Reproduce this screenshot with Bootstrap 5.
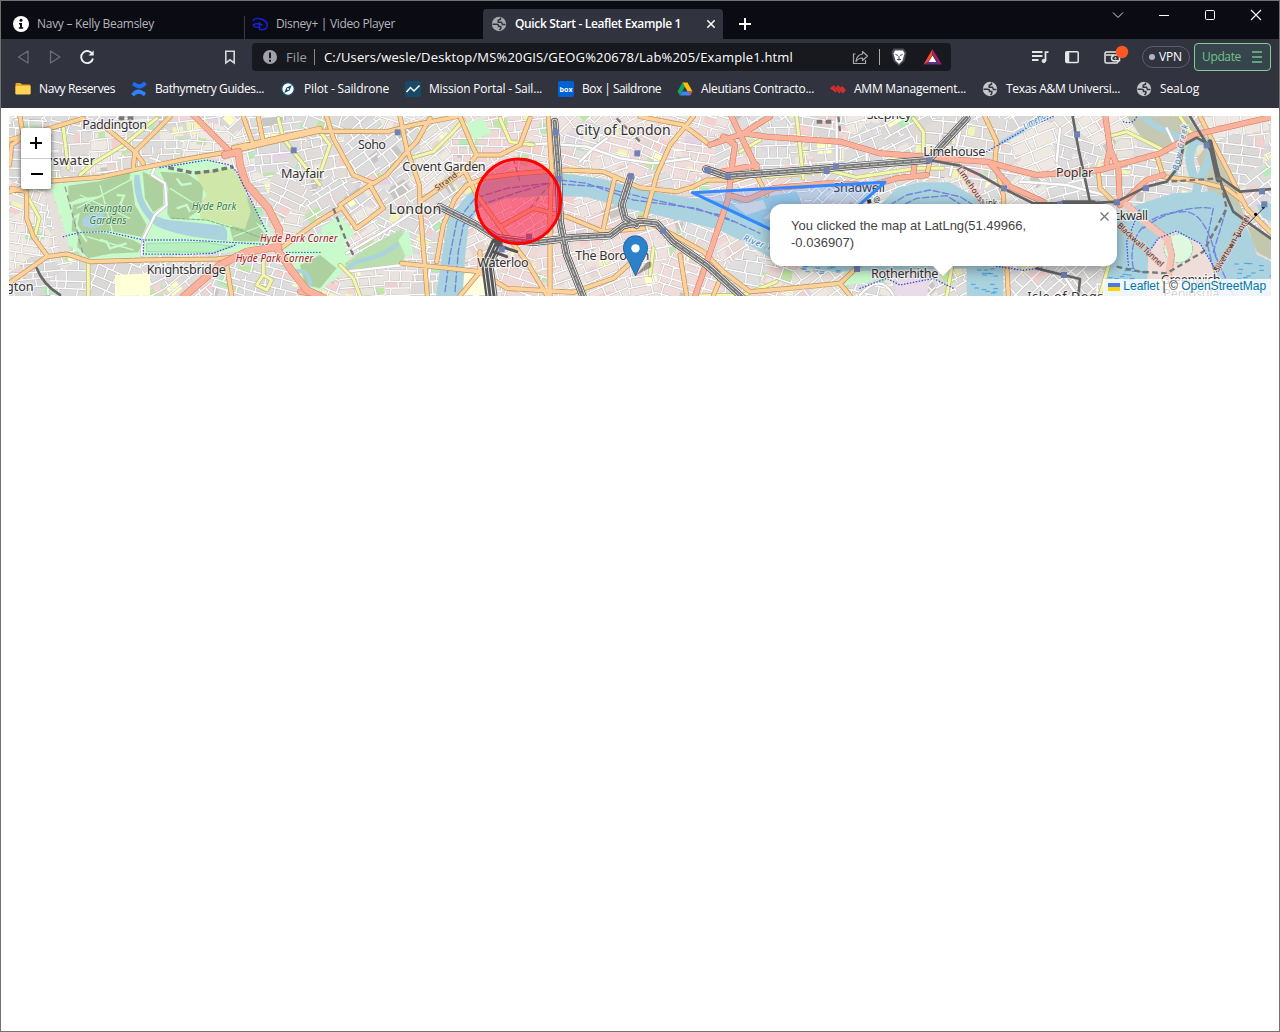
<!DOCTYPE html>
<html lang="en">
<head>
<meta charset="utf-8">
<title>Quick Start - Leaflet Example 1</title>
<link href="https://cdn.jsdelivr.net/npm/bootstrap@5.3.0/dist/css/bootstrap.min.css" rel="stylesheet">
<style>
  html, body { height: 100%; margin: 0; }
  body { font-family: "Open Sans", "Noto Sans", sans-serif; font-size: 12px; line-height: 16px; background: #fff; }
  .win { height: 1032px; width: 1280px; border: 1px solid #70736f; }
  .tabstrip { height: 38px; background: #0b0b14; color: #b4b5ba; }
  .tabitem { height: 30px; padding-left: 12px; gap: 8px; }
  .tab-a { width: 243px; }
  .tabsep { width: 1px; height: 23px; background: #3b3b40; }
  .tab-b { width: 238px; padding-left: 7px; }
  .tab-on { width: 240px; padding-left: 8px; background: #31333f; color: #fff; border-radius: 4px 4px 0 0; font-weight: 600; }
  .winbtns { margin-top: 6px; margin-right: 15px; gap: 30px; height: 16px; }
  .toolbar { height: 36px; background: #31333f; color: #fff; }
  .omni { width: 699px; height: 28px; margin-left: 14px; background: #17191f; border-radius: 4px; font-size: 13px; padding-left: 10px; }
  .fileword { color: #9b9da5; }
  .vbar { width: 1px; height: 16px; background: #85878e; }
  .vpn { width: 48px; height: 22px; border: 1px solid #5b5e72; border-radius: 11px; padding-left: 6px; gap: 4px; }
  .vdot { width: 6px; height: 6px; border-radius: 3px; background: #b0b2c8; }
  .upd { width: 77px; height: 28px; border: 1px solid #7fcf97; border-radius: 4px; background: #36454b; color: #75c08a; padding-left: 7px; }
  .bmbar { height: 33px; background: #31333f; color: #fff; padding: 0 0 5px 14px; gap: 16px; }
  .bm { gap: 8px; }
  .fit { white-space: nowrap; display: inline-block; }
  svg { display: block; flex: none; }
  .mapbox { margin: 8px 8px 0; height: 180px; overflow: hidden; font-family: "Liberation Sans", Arial, sans-serif; }
  .zoomer { left: 12px; top: 12px; width: 30px; height: 61px; background: #fff; border-radius: 2px; box-shadow: 0 1px 5px rgba(0,0,0,.65); }
  .zoomer div { height: 30px; }
  .zoomer div + div { border-top: 1px solid #ccc; height: 31px; }
  .pop { left: 761px; top: 88px; width: 347px; height: 62px; padding: 13px 24px 0 21px; background: #fff; border-radius: 12px; box-shadow: 0 3px 14px rgba(0,0,0,.4); color: #444; font-size: 13px; line-height: 17px; }
  .tip { left: 162px; top: 61px; }
  .pclose { right: 8px; top: 8px; }
  .attr { right: 0; bottom: 0; height: 17px; width: 168px; padding: 0 5px 2px; gap: 3.300px; background: rgba(255,255,255,.8); font-size: 12px; line-height: 15px; color: #333; white-space: nowrap; }
  .attr span { color: #0078a8; }
  .fl { fill: none; stroke-linejoin: round; stroke-linecap: round; }
  .lab text { font-family: "Noto Sans", sans-serif; fill: #333; stroke: #fff; stroke-opacity: .65; stroke-width: 7px; paint-order: stroke; stroke-linejoin: round; }
</style>
<script src="https://cdn.jsdelivr.net/npm/bootstrap@5.3.0/dist/js/bootstrap.bundle.min.js"></script>
</head>
<body>
<svg width="0" height="0" class="position-absolute">
  <defs>
    <symbol id="globe" viewBox="0 0 16 16"><circle cx="8" cy="8" r="7.200" fill="currentColor"/><path d="M1.500 8.200H5.500Q7.500 8.200 7.500 9.500V10.500H9.800V12.500L8.500 14" fill="none" stroke="#31333f" stroke-width="1.500"/><path d="M9.500 1.500V3.200L7.200 4.200V6.200H10.500L11.500 8.500H14.500" fill="none" stroke="#31333f" stroke-width="1.500"/></symbol>
  </defs>
</svg>
<div class="win d-flex flex-column">
  <div class="tabstrip d-flex align-items-end">
    <div class="tab-a d-flex align-items-center tabitem">
      <svg width="16" height="16" viewBox="0 0 16 16"><circle cx="8" cy="8" r="8" fill="#fff"/><circle cx="8" cy="4.200" r="1.500" fill="#0b0b14"/><path d="M6 7h3v4.300h1.200v1.400H5.800v-1.400H7V8.400H6z" fill="#0b0b14"/></svg>
      <span class="fit" data-w="117">Navy – Kelly Beamsley</span>
    </div>
    <div class="tabsep"></div>
    <div class="tab-b d-flex align-items-center tabitem">
      <svg width="16" height="16" viewBox="0 0 16 16" fill="none" stroke="#1d20e0" stroke-width="1.400"><path d="M1.500 5 C.5 2.500 5.500 1.800 9 3 C14 4.700 16 7.500 15 10.500 C14 13.500 10.500 14 7.500 13.300 M7.500 6 V13.500 M10.500 9 C6 7 .8 7.500 1.500 9.500 C2 11 5 11.300 8 11"/></svg>
      <span class="fit" data-w="119">Disney+ | Video Player</span>
    </div>
    <div class="tab-on d-flex align-items-center tabitem">
      <svg width="16" height="16" style="color:#a7a9b0"><use href="#globe"/></svg>
      <span class="fit" data-w="166">Quick Start - Leaflet Example 1</span>
      <svg class="ms-auto me-2" width="8" height="8" viewBox="0 0 8 8" stroke="#fff" stroke-width="1.500"><path d="M.3.3 7.700 7.700M7.700.3.3 7.700"/></svg>
    </div>
    <svg class="ms-3" width="12" height="30" viewBox="0 0 12 30" stroke="#fff" stroke-width="2"><path d="M0 15H12M6 9V21"/></svg>
    <div class="winbtns d-flex align-items-center ms-auto align-self-start">
      <svg width="16" height="16" viewBox="0 0 16 16" fill="none" stroke="#ddd"><path d="M3 5.500 8 10.500 13 5.500"/></svg>
      <svg width="16" height="16" viewBox="0 0 16 16" stroke="#fff"><path d="M3 8.500H13"/></svg>
      <svg width="16" height="16" viewBox="0 0 16 16" fill="none" stroke="#fff"><rect x="3.500" y="3.500" width="9" height="9" rx="1.200"/></svg>
      <svg width="16" height="16" viewBox="0 0 16 16" stroke="#fff" stroke-width="1.100"><path d="M3 3 13 13M13 3 3 13"/></svg>
    </div>
  </div>
  <div class="toolbar d-flex align-items-center">
    <svg width="96" height="20" viewBox="1 0 96 20" fill="none" stroke="#6b6d78" stroke-width="1.300" stroke-linejoin="round"><path d="M28 4V16L18.500 10ZM50.500 4V16L60 10Z"/><path d="M92.600 7.500A6 6 0 1 0 93 11.500" stroke="#f0f0f0" stroke-width="1.900"/><path d="M93.700 3.500V8.500H88.500Z" fill="#f0f0f0" stroke="none"/></svg>
    <svg style="margin-left:127px" width="14" height="16" viewBox="0 0 14 16" fill="none" stroke="#d6d7da" stroke-width="1.600"><path d="M1.800 2.200H10.200V14L6 10.800 1.800 14Z"/></svg>
    <div class="omni d-flex align-items-center">
      <svg width="16" height="16" viewBox="0 0 16 16"><circle cx="8" cy="8" r="7" fill="#a0a2a9"/><path d="M7 3.500h2v5.800H7zM7 10.800h2v1.900H7z" fill="#17191f"/></svg>
      <span class="fit fileword ms-2" data-w="21">File</span>
      <span class="vbar" style="margin-left:7px"></span>
      <span class="fit" style="margin-left:9px" data-w="469">C:/Users/wesle/Desktop/MS%20GIS/GEOG%20678/Lab%205/Example1.html</span>
      <svg width="106" height="20" viewBox="845 47 106 20" class="ms-auto">
        <path d="M855.500 54H853.500V63.500H865.500V60" fill="none" stroke="#a7a9ae" stroke-width="1.200"/>
        <path d="M862.500 51.500 867.500 56 862.500 60.500V58Q858.500 57.800 856 61.500 Q856.500 55 862.500 54Z" fill="none" stroke="#a7a9ae" stroke-width="1.200" stroke-linejoin="round"/>
        <path d="M879.500 49V65" stroke="#a7a9ae"/>
        <path d="M893.500 48.500H903.500L906.500 52.500 904.500 61 899 66 893.500 61 891.500 52.500Z" fill="#4b4d5c"/>
        <path d="M895 50.500H903L904.500 53.500 902.500 60.500 899 64 895.500 60.500 893.500 53.500Z" fill="#fff"/><path d="M895.500 54.500 898 55.500M902.500 54.500 900 55.500M897 59.500H901M899 56V60.500" stroke="#454757"/>
        <path d="M932.500 49 923.500 64.500 928 62 932.500 55Z" fill="#ff4a20"/><path d="M932.500 49 942 64.500 937.500 62 932.500 55Z" fill="#9e1f63"/><path d="M923.500 64.500H942L937.500 61.800H928Z" fill="#662d91"/><path d="M932.500 55.500 936.500 62H928.500Z" fill="#fff"/>
      </svg>
    </div>
    <svg width="110" height="28" viewBox="1026 43 110 28" style="margin-left:75px" fill="none" stroke="#e6e6e9" stroke-width="1.800">
      <path d="M1032 52H1042.500M1032 56H1042.500M1032 60H1038.500M1045.500 61V52.200H1048.500"/><circle cx="1043.800" cy="61" r="1.700" fill="#e6e6e9" stroke-width="1"/>
      <rect x="1065.800" y="51.800" width="12.400" height="10.600" rx="1" stroke-width="1.500"/><path d="M1067.500 52V62" stroke-width="3.500"/>
      <path d="M1118 55V53.500Q1118 52 1116.500 52H1106.500Q1105 52 1105 53.500V61.500Q1105 63 1106.500 63H1116.500Q1118 63 1118 61.500M1106 55H1119.500V60.800H1114Q1111.500 60.500 1111.500 58.300T1114 55.500" stroke-width="1.500"/><circle cx="1115.500" cy="58.200" r=".7" stroke-width="1"/>
      <circle cx="1122" cy="52" r="6.200" fill="#ff5722" stroke="none"/>
    </svg>
    <div class="vpn d-flex align-items-center" style="margin-left:6px"><span class="vdot"></span><span class="fit" data-w="23">VPN</span></div>
    <div class="upd d-flex align-items-center ms-1"><span class="fit" data-w="39">Update</span>
      <svg class="ms-auto me-2" width="10" height="12" viewBox="0 0 10 12" stroke="#75c08a" stroke-width="1.300"><path d="M0 1H10M0 6H10M0 11H10"/></svg></div>
  </div>
  <div class="bmbar d-flex align-items-center">
    <div class="bm d-flex align-items-center"><svg width="16" height="16" viewBox="0 0 16 16"><path d="M.5 3Q.5 2 1.500 2H5.500L7 3.500H14.500Q15.500 3.500 15.500 4.500V13H.5Z" fill="#e5a92b"/><path d="M.5 5H15.500V12.500Q15.500 13.500 14.500 13.500H1.500Q.5 13.500.5 12.500Z" fill="#ffd454"/></svg><span class="fit" data-w="76">Navy Reserves</span></div>
    <div class="bm d-flex align-items-center"><svg width="16" height="16" viewBox="0 0 16 16"><path d="M1 4 3 .8C8 4.500 10 3.500 13 .5L15.800 3C11 9 7 8.500 1 4Z" fill="#1f6df0"/><path d="M15 12 13 15.200C8 11.500 6 12.500 3 15.500L.2 13C5 7 9 7.500 15 12Z" fill="#2f83ff"/></svg><span class="fit" data-w="109">Bathymetry Guides...</span></div>
    <div class="bm d-flex align-items-center"><svg width="16" height="16" viewBox="0 0 16 16"><circle cx="8" cy="8" r="6.300" fill="#fff" stroke="#154b6b" stroke-width="1.300"/><path d="M11.800 4 9.500 9.500 4.200 12 6.500 6.500Z" fill="#154b6b"/><circle cx="8" cy="8" r="1" fill="#fff"/></svg><span class="fit" data-w="85">Pilot - Saildrone</span></div>
    <div class="bm d-flex align-items-center"><svg width="16" height="16" viewBox="0 0 16 16"><rect width="16" height="16" rx="2" fill="#174a66"/><path d="M1.500 11 5.500 6.500 9 10 14.500 4.500" fill="none" stroke="#fff" stroke-width="1.500"/></svg><span class="fit" data-w="113">Mission Portal - Sail...</span></div>
    <div class="bm d-flex align-items-center"><svg width="16" height="16" viewBox="0 0 16 16"><rect width="16" height="16" rx="2" fill="#0061d5"/><text x="1.500" y="10.500" font-size="7" font-weight="700" fill="#fff" textLength="13" lengthAdjust="spacingAndGlyphs">box</text></svg><span class="fit" data-w="79">Box | Saildrone</span></div>
    <div class="bm d-flex align-items-center"><svg width="16" height="16" viewBox="0 0 16 16"><path d="M5.500 1.500 .5 10.500 3 14.500 8 5.500Z" fill="#17a562"/><path d="M5.500 1.500H10.500L15.500 10.500H10.500Z" fill="#ffbe0a"/><path d="M5.500 10.500H15.500L13 14.500H3Z" fill="#4285f4"/><path d="M12 10.500H15.500L13 14.500Z" fill="#ea4335"/></svg><span class="fit" data-w="113">Aleutians Contracto...</span></div>
    <div class="bm d-flex align-items-center"><svg width="16" height="16" viewBox="0 0 16 16"><path d="M0 7.500 3.500 4 6 6.500 8 4 10.500 6.500 12 5 16 9 13 12.500 11 10.500 9.500 12.500 7 10 5.500 11.500Z" fill="#d3312d"/><path d="M3 5.500 8 11M7 6 11.500 11" stroke="#7b2c34" stroke-width=".6"/></svg><span class="fit" data-w="112">AMM Management...</span></div>
    <div class="bm d-flex align-items-center"><svg width="16" height="16" style="color:#c6c7cb"><use href="#globe"/></svg><span class="fit" data-w="114">Texas A&amp;M Universi...</span></div>
    <div class="bm d-flex align-items-center"><svg width="16" height="16" style="color:#c6c7cb"><use href="#globe"/></svg><span class="fit" data-w="39">SeaLog</span></div>
  </div>

  <div class="mapbox position-relative">
    <!-- one pixel on screen is three map units -->
    <svg id="map" width="1262" height="180" viewBox="27 23 3786 540">
      <rect x="0" y="0" width="3840" height="600" fill="#e4e1de"/>
      <g id="blocks"></g>
      <!-- parks -->
      <g>
        <path d="M150 232 390 182 465 172 620 150 700 180 745 270 800 350 832 405 720 430 430 446 270 456 205 410 188 340Z" fill="#c8facc"/>
        <path d="M130 240 150 232 215 440 180 430Z" fill="#e6e0da"/>
        <g fill="#add19e">
          <path d="M205 232 300 218 392 190 385 235 310 262 240 270 205 285Z"/><path d="M218 290 300 268 330 245 395 215 405 290 440 350 425 385 330 368 215 370Z"/>
          <path d="M235 372 320 375 400 395 425 410 415 432 330 436 265 450 232 415Z"/><path d="M480 190 560 195 610 230 605 300 560 332 510 330 502 315 505 240Z"/>
          <path d="M690 360 750 320 790 370 812 400 700 398Z"/><path d="M700 180 725 240 765 300 795 360 750 330Z"/><path d="M428 190 462 205 490 230 490 290 460 312 435 270Z"/>
        </g>
        <path d="M582 190 700 180 730 230 752 310 735 362 600 330 600 290 620 260Z" fill="#cfe8a9"/>
        <g fill="none" stroke="#c8facc" stroke-width="4"><path d="M230 300 400 210M240 260 390 330M300 230 340 380M260 385 400 425M510 240 590 290M700 385 790 350"/><path d="M215 330 235 320 228 350 260 400M350 260 372 262 360 290 385 300M300 395 320 400 330 420 380 405M530 210 545 230 575 225M530 300 560 290 570 310" stroke-width="7"/></g>
        <path d="M440 405 620 402 700 415 640 432 440 430Z" fill="#b7f0be" stroke="#8ccfae" stroke-width="2"/>
        <path d="M404 200H417C426 235 420 262 445 300C462 326 490 336 540 338L670 352Q686 360 680 397C600 388 520 380 468 352C425 322 395 260 404 200Z" fill="#aad3df"/>
        <path d="M247 335C255 312 295 318 312 312L305 350Q270 370 247 348Z" fill="#aad3df"/>
        <path d="M850 425 960 375 1060 428 1020 500 960 548 905 540Z" fill="#c8facc"/><path d="M900 470 960 440 1010 480 960 540 915 530Z" fill="#add19e"/><path d="M880 490Q930 480 930 530" class="fl" stroke="#aad3df" stroke-width="12"/>
        <path d="M1035 465 1100 420 1205 362 1220 430 1205 470 1040 492Z" fill="#b9dfae"/><path d="M1045 480C1080 440 1110 470 1190 410" class="fl" stroke="#aad3df" stroke-width="13"/>
        <path d="M965 355 1020 325 1065 370 1030 410 965 385Z" fill="#c8facc"/>
        <path d="M1400 45 1450 30 1475 75 1420 95Z" fill="#c8facc"/><path d="M1380 500 1440 480 1460 560 1380 560Z" fill="#fffde0"/>
        <path d="M345 500 450 495 450 562 345 562Z" fill="#ffffd8"/>
        <path d="M3380 24 3560 24 3600 80 3490 130 3420 80Z" fill="#c5c8b3"/><path d="M3630 100 3690 210 3740 340 3640 290 3590 150Z" fill="#c5c8b3"/><path d="M2700 500 2790 520 2780 562 2680 562Z" fill="#e9dbe8"/><path d="M2530 450 2600 450 2620 520 2540 530Z" fill="#c8facc"/>
        <path d="M2230 70 2250 60 2262 90 2240 95ZM1195 395 1225 360 1240 440 1215 440Z" fill="#c8facc"/>
      </g>
      <!-- water -->
      <g fill="#aad3df">
        <path d="M1308 564 1325 450 1345 330 1400 262 1460 217 1560 188 1660 190 1810 212 1920 243 2050 265 2180 280 2330 330 2500 380 2700 340 2630 300 2690 240 2760 222 2850 222 2920 262 2960 300 3010 480 3010 564 2900 564 2900 480 2500 490 2330 460 2230 400 2150 362 2020 332 1880 300 1760 266 1640 262 1520 270 1435 300 1405 360 1395 450 1388 564Z"/>
        <path d="M2190 275 2300 265 2390 250 2430 340 2340 340 2300 320Z"/>
        <path d="M3340 330 3410 290 3520 255 3640 248 3700 290 3730 340 3760 400 3770 440 3840 470 3840 564 3310 564Z"/>
        <path d="M3770 290 3840 280 3840 350 3790 330Z"/>
      </g>
      <g class="fl" stroke="#aad3df"><path d="M3430 24C3480 80 3540 60 3548 120L3520 200" stroke-width="18"/><path d="M3580 200C3550 120 3590 80 3620 100C3660 150 3590 180 3580 300" stroke-width="26"/><path d="M3000 105 3080 60 3140 24" stroke-width="12"/></g>
      <path d="M3440 564 3445 440 3475 390 3530 368 3600 405 3650 490 3665 564Z" fill="#eeddd8"/>
      <circle cx="3535" cy="420" r="43" fill="#dff8df" stroke="#88d6a0" stroke-width="3" stroke-dasharray="9 4"/>
      <path d="M3740 350 3840 405 3840 470 3770 430Z" fill="#c3c7ae"/>
      <path d="M2200 290 2290 275 2300 300 2240 320ZM2290 330 2340 290 2360 345Z" fill="#e7e1df"/>
      <g class="fl" stroke="#6876dd" stroke-width="4" stroke-dasharray="20 8" opacity=".85">
        <path d="M1335 550 1350 440 1370 340 1425 270 1520 240 1640 225 1800 235 1920 265 2030 290 2160 320 2280 375"/><path d="M1365 550 1375 430 1390 350 1440 290 1560 250 1680 215 1760 225 1900 275 2090 300 2200 340"/>
        <path d="M2670 290 2720 260 2790 245 2880 265 2920 290"/><path d="M2690 300 2750 270 2840 262 2900 300"/>
        <path d="M3400 480C3380 380 3440 310 3560 310C3620 320 3640 420 3650 450"/><path d="M3430 360C3480 320 3560 290 3640 300L3620 400 3660 560"/><path d="M3700 560 3640 430 3680 300"/>
      </g>
      <g stroke="#1588e8" stroke-width="2" id="ticks"></g>
      <!-- light local roads -->
      <g class="fl"><g stroke="#c9c3c3" stroke-width="11"><path id="w1" d="M465 175 455 200 495 225 500 290 465 320 430 390 425 440M1040 435 1150 370 1270 290M1040 490 1210 470M1560 110 1640 105 1760 115 1860 150 1960 165 2070 150M1820 90 1780 120 1740 160M2100 210 2070 250M2890 25 2850 200M2510 30 2510 170M2600 120 2600 170M2430 160 2440 200M3180 60 3170 160M3060 220 3200 230 3330 265M3500 60 3520 100M2680 560Q2640 490 2580 560M3120 480 3190 500 3230 560M1280 560 1290 480"/></g><use href="#w1" stroke="#fff" stroke-width="7"/></g>
      <!-- secondary roads -->
      <g class="fl"><g stroke="#b9b97a" stroke-width="13"><path id="y1" d="M190 60 205 180M240 200 280 165 370 110 470 30M80 260 118 330 105 380M265 465 265 560M790 450 790 500 770 530 800 545 815 515 790 500M835 30 850 90 880 130 960 230M960 195 990 110 960 70M1230 150 1300 130 1360 70 1390 35M1500 30 1530 100 1600 110M1020 470 1060 510 1080 562M2390 25 2410 210M2220 130 2280 95M2300 205 2400 197 2480 185 2570 207 2750 180 2830 180M2740 30 2770 70 2770 130M2855 480 2840 562M3325 85 3380 70 3500 130M3540 25 3570 70 3610 90M3325 475 3300 562M2100 562 2230 560 2330 520M1960 420 1950 500"/></g><use href="#y1" stroke="#f4f7ae" stroke-width="9"/></g>
      <!-- primary roads -->
      <g class="fl"><g stroke="#c09350" stroke-width="15"><path id="o1" d="M27 250 155 218 300 207 420 180 560 152 700 128 840 95 960 68 1160 70 1240 50 1370 25M700 118 960 60M730 25 760 110M775 25 790 105M60 25 70 85 35 110 28 170M27 95 100 75 250 30M320 60 405 130 430 165M510 25 405 130 400 175M35 240 80 250 80 330 100 385 140 440M27 525 140 445 200 437 270 460 430 455 650 452 760 440M680 470 695 562M835 425 960 335 1020 300M980 25 1000 90 1060 200 1120 225 1160 200 1230 120 1250 100 1290 30M1200 25 1220 120 1258 230 1260 290 1270 420 1282 562M1380 25 1420 120 1430 140 1390 190 1260 280M1430 140 1500 140 1560 110 1590 30M1310 460 1330 350 1365 270 1400 230 1460 208 1560 195 1700 185 1810 190 1920 238 2030 250 2080 235 2120 215 2200 215 2270 195M1390 180 1430 260 1500 355M1645 25 1655 180 1650 320 1650 562M1845 205 1810 360M1500 355 1600 300 1700 325 1810 370 1930 360M1500 355 1580 460 1640 560M1205 465 1440 490 1520 540 1720 552 1840 510 1930 430M1020 290 1070 360 1150 300 1110 230ZM1380 562 1440 490 1440 430M1920 25 2050 50 2130 110 2180 85 2200 100M2080 25 2010 110 1970 200 1935 330M1920 330 2020 380 2110 430 2170 490 2250 550 2370 540 2520 525 2590 460M2040 440 2060 562M2170 490 2140 562M2520 525 2550 562M2260 180 2300 260M2955 25 2990 100 2985 160 3010 260 3025 562M3600 25 3680 180 3740 300 3840 400M3470 140 3490 205 3580 215 3680 240 3730 280M3295 190 3300 240 3340 280M2790 160 2780 200"/></g><use href="#o1" stroke="#fdd29c" stroke-width="11"/></g>
      <!-- trunk roads -->
      <g class="fl"><g stroke="#d9755c" stroke-width="18"><path id="r1" d="M575 15 690 130M960 560 900 550M2190 15 2270 180M2170 85 2205 110 2195 180 2185 270 2085 564M2310 25 2230 75 2130 110M2230 75 2300 85 2520 100 2640 135 2780 145 2880 155 2960 160 3050 185 3110 200 3300 185 3480 135 3580 80 3840 20M2165 190 2270 170M2185 260 2240 275 2320 240 2480 225 2620 230 2690 210 2780 200M2745 150 2740 200M2970 165 3030 235 3130 280M3360 290 3440 215 3490 200M3315 15 3330 120 3355 180 3360 290M3330 120 3320 165"/></g><use href="#r1" stroke="#f9b29c" stroke-width="15"/></g>
      <g class="fl"><path id="r2" d="M675 140 715 130 720 170 738 225 805 300 838 365 830 420 870 480 920 545 970 568M835 415 740 430 660 470 550 566" stroke="#df7b66" stroke-width="23"/><path d="M675 140 715 130 720 170 738 225 805 300 838 365 830 420 870 480 920 545 970 568M835 415 740 430 660 470 550 566" stroke="#f9b29c" stroke-width="20"/></g>
      <path d="M3380 290 3440 345 3500 390 3515 440 3500 520" class="fl" stroke="#f6c4b6" stroke-width="20"/><path d="M3390 285 3450 340 3512 388 3524 440 3512 520" class="fl" stroke="#cf8374" stroke-width="2" stroke-dasharray="10 6"/>
      <!-- railways -->
      <g class="fl" stroke="#444" stroke-width="22"><path id="t1" d="M1320 295 1430 350 1490 388 1600 402 1720 388 1830 382 1870 352 1920 340 1970 345 2020 400 2120 470 2235 575M1664 40 1675 180 1680 340 1700 440 1752 572M1892 205 1865 290 1875 330 1910 350M2118 182 2180 203 2420 185 2620 168 2785 155 2900 30"/></g>
      <use href="#t1" class="fl" stroke="#f3f3f3" stroke-width="18"/><use href="#t1" class="fl" stroke="#777" stroke-width="13"/><use href="#t1" class="fl" stroke="#eee" stroke-width="2" stroke-dasharray="18 7"/>
      <g class="fl"><path d="M1490 405 1462 470 1475 570" stroke="#555" stroke-width="36"/><path d="M1482 405 1452 470 1465 570M1492 408 1464 470 1477 570M1502 410 1476 470 1489 570" stroke="#eee" stroke-width="3"/>
      <path d="M1480 430 1520 445M1490 410 1550 430" stroke="#555" stroke-width="9" stroke-dasharray="14 3"/></g>
      <g class="fl" stroke="#666" stroke-width="8"><path d="M2785 155 2880 172 2940 200 3010 240 3100 285 3270 285 3350 280 3400 255 3440 235 3500 220 3540 170 3550 110 3590 88 3630 110 3650 200 3720 250 3840 240M3218 24 3235 120 3270 280M3570 24 3640 140 3665 230 3700 310 3740 340 3840 410M110 480Q130 530 180 560M3110 480 3190 500 3240 512 3235 562"/><path d="M3190 285H3280" stroke-width="18"/><path d="M3630 100 3655 215" stroke-width="15"/></g>
      <g fill="none" stroke="#777" stroke-width="10" stroke-dasharray="17 10"><path d="M505 178 580 194 640 188 700 175"/><path d="M3350 475 3420 490 3500 495 3610 430 3680 300 3660 210 3500 220" stroke-width="7"/><path d="M1000 300 1040 400 1060 440M2515 25 2520 70M1850 30 1920 100" stroke-width="7"/><path d="M195 235 250 440" stroke="#999" stroke-width="4"/><path d="M1540 150 1560 220M1590 300 1680 190" stroke="#999" stroke-width="4"/><path d="M2450 40 2500 40M400 30 350 30" stroke-width="12"/></g>
      <!-- cycle and foot ways -->
      <g class="fl" stroke="#3346e8" stroke-width="4" stroke-dasharray="1 8"><path d="M190 385 240 372 320 370 430 395 560 395 800 408M430 400V437L560 438 640 435 705 410M480 178 620 155 690 170 710 190 800 370M860 432H960M3385 470 3380 400 3420 300M3440 440 3475 390 3530 368 3600 405 3650 490M2580 540 2660 510 2700 530 2800 510 2860 540M2960 130 3080 60 3160 24M3370 40Q3400 50 3410 24M2990 474 3070 486 3130 478"/></g>
      <path d="M515 330 620 335 740 372 800 395" class="fl" stroke="#76b576" stroke-width="3" stroke-dasharray="10 5"/>
      <path d="M3645 480 3690 415 3730 360 3790 300" class="fl" stroke="#333" stroke-width="3"/><g><circle cx="3645" cy="480" r="5"/><circle cx="3695" cy="413" r="5"/><circle cx="3718" cy="382" r="5"/><circle cx="3670" cy="446" r="5"/><circle cx="3767" cy="318" r="5"/><circle cx="3790" cy="296" r="5"/></g>
      <g id="stations" fill="#7181b4"></g>
      <!-- labels -->
      <g class="lab" font-size="38" transform="translate(0 2)">
        <text x="247" y="59" textLength="194">Paddington</text><text x="115" y="168" textLength="170">ayswater</text>
        <text x="440" y="494" textLength="238">Knightsbridge</text><text x="18" y="545" textLength="83">gton</text>
        <text x="843" y="206" textLength="130">Mayfair</text><text x="1074" y="121" textLength="84">Soho</text>
        <text x="1207" y="187" textLength="250">Covent Garden</text><text x="1166" y="314" font-size="43" textLength="158">London</text>
        <text x="1432" y="473" textLength="154">Waterloo</text><text x="1726" y="77" font-size="42" textLength="286">City of London</text>
        <text x="1726" y="453" textLength="222">The Borough</text><text x="2600" y="31" textLength="134">Stepney</text>
        <text x="2500" y="250" textLength="155">Shadwell</text><text x="2770" y="140" textLength="186">Limehouse</text>
        <text x="2613" y="507" textLength="202">Rotherhithe</text><text x="3168" y="205" textLength="112">Poplar</text>
        <text x="3292" y="333" textLength="152">Blackwall</text><text x="3482" y="524" textLength="180">Greenwich</text><text x="3490" y="566" textLength="168">Peninsula</text>
        <text x="3082" y="576" textLength="228">Isle of Dogs</text>
        <g font-size="30" font-style="italic"><text x="250" y="310" textLength="147" style="fill:#2f7d49;stroke-width:4px">Kensington</text><text x="268" y="345" textLength="112" style="fill:#2f7d49;stroke-width:4px">Gardens</text><text x="575" y="304" textLength="134" style="fill:#2f7d49;stroke-width:4px">Hyde Park</text>
        <text x="780" y="398" textLength="233" style="fill:#a3171d">Hyde Park Corner</text><text x="707" y="458" textLength="233" style="fill:#a3171d">Hyde Park Corner</text></g>
        <g font-size="24"><text transform="translate(1312 246) rotate(-36)" textLength="76" style="stroke:#fdd29c">Strand</text>
        <text transform="translate(3350 352) rotate(43)" textLength="180" style="stroke:#f9c4b6">Blackwall Tunnel</text><text transform="translate(3655 490) rotate(-60)" textLength="190" style="stroke:#f9c4b6">Silvertown Tunnel</text><text transform="translate(2870 180) rotate(56)" textLength="135" style="stroke:#f9c4b6">Limehouse</text><text x="2945" y="290">Link</text><text x="2602" y="286" transform="rotate(-12 2602 286)">■ @</text></g>
        <g font-size="26" font-style="italic"><text transform="translate(2228 393) rotate(22)" textLength="175" style="fill:#4d80b3">River Thames</text><text transform="translate(3535 185) rotate(-78)" textLength="140" style="fill:#4d80b3">Bow Creek</text><text transform="translate(3075 62) rotate(-30)" textLength="110" style="fill:#4d80b3">Limehouse</text></g>
      </g>
      <!-- vectors -->
      <path d="M2077 253 2655 222 2431 419Z" fill="#38f" fill-opacity=".2" stroke="#3388ff" stroke-width="9" stroke-linejoin="round"/>
      <circle cx="1555" cy="279" r="127" fill="#f03" fill-opacity=".5" stroke="#f00" stroke-width="9"/>
      <!-- marker -->
      <g transform="translate(1869 381) scale(3)">
        <path d="M13 40 24 27Q30 24 28 32Z" fill="#000" opacity=".35"/>
        <path d="M12.500.5C5.800.5.5 5.900.5 12.500C.5 18 3.500 22 6.500 27.500L12.500 40.500 18.500 27.500C21.500 22 24.500 18 24.500 12.500C24.500 5.900 19.200.5 12.500.5Z" fill="#2b82cb" stroke="#2467a4"/>
        <circle cx="12.500" cy="13" r="4.200" fill="#fff"/>
      </g>
    </svg>
    <div class="zoomer position-absolute">
      <div class="d-flex align-items-center justify-content-center"><svg width="12" height="12" viewBox="0 0 12 12" stroke="#000" stroke-width="2"><path d="M0 6H12M6 0V12"/></svg></div>
      <div class="d-flex align-items-center justify-content-center"><svg width="13" height="12" viewBox="0 0 13 12" stroke="#000" stroke-width="2"><path d="M1 6H13"/></svg></div>
    </div>
    <div class="pop position-absolute">
      <span class="fit" data-w="235">You clicked the map at LatLng(51.49966,</span><br><span class="fit" data-w="63">-0.036907)</span>
      <svg class="tip position-absolute" width="22" height="12" viewBox="0 0 22 12"><path d="M0 0H22L11 11Z" fill="#fff"/></svg>
      <svg class="pclose position-absolute" width="9" height="9" viewBox="0 0 9 9" stroke="#757575" stroke-width="1.300"><path d="M.5.5 8.500 8.500M8.500.5.5 8.500"/></svg>
    </div>
    <div class="attr position-absolute d-flex align-items-center">
      <svg width="12" height="8" viewBox="0 0 12 8"><path fill="#4c7be1" d="M0 0h12v4H0z"/><path fill="#ffd500" d="M0 4h12v4H0z"/></svg>
      <span class="fit" data-w="36">Leaflet</span><b class="fw-normal">|</b><b class="fw-normal">©</b><span class="fit" data-w="85">OpenStreetMap</span>
    </div>
  </div>
</div>
<script>
  // Letter-spacing makes each label fill its width.
  document.querySelectorAll('.fit').forEach(function (el) {
    var w = +el.dataset.w, n = el.textContent.length;
    el.style.letterSpacing = ((w - el.getBoundingClientRect().width) / n).toFixed(3) + 'px';
    el.style.width = w + 'px';
  });
  // Town blocks: a mosaic of districts, each with its own street direction.
  var seed = 41;
  function rnd() { seed = (seed * 16807) % 2147483647; return seed / 2147483647; }
  function pick(a) { return a[Math.floor(rnd() * a.length)]; }
  var out = '', defs = '', k = 0;
  for (var gx = 0; gx < 3900; gx += 125) for (var gy = 40; gy < 620; gy += 125) {
    var cx = gx + rnd() * 80 - 40, cy = gy + rnd() * 80 - 40, R = 118, a = rnd() * 70 - 45;
    var city = cx > 1450 && cx < 2400;
    var base = pick(city ? ['#f0dcda', '#eee3de', '#e0dfdf', '#f0d8d6'] : ['#dddcdc', '#dddcdc', '#dbd9d8', '#e8e3dc', '#eee9e2', '#e0dcda']);
    var pts = '';
    for (var i = 0; i < 7; i++) { var t = i / 7 * 6.283, r = R * (.8 + rnd() * .35); pts += (cx + Math.cos(t) * r).toFixed(0) + ',' + (cy + Math.sin(t) * r).toFixed(0) + ' '; }
    defs += '<clipPath id="c' + k + '"><polygon points="' + pts + '"/></clipPath>';
    var fills = '', d = '';
    for (i = 0; i < 11; i++) {
      var fx = rnd() * 200 - 100, fy = rnd() * 200 - 100;
      fills += '<rect x="' + fx.toFixed(0) + '" y="' + fy.toFixed(0) + '" width="' + (16 + rnd() * 44).toFixed(0) + '" height="' + (14 + rnd() * 28).toFixed(0) + '" fill="' + pick(['#f3d0ce', '#f1d6d4', '#f6cfcf', '#e8d8d3', '#b4ecb8', '#c0e8a4', '#ffffc8', '#f3f5b8', '#e4d3e4', '#c8c6c4', '#eee8df']) + '"/>';
    }
    var y = -120, rows = [];
    while (y < 125) { rows.push(y); d += 'M' + (-125) + ' ' + y.toFixed(0) + 'Q0 ' + (y + rnd() * 14 - 7).toFixed(0) + ' 125 ' + (y + rnd() * 10 - 5).toFixed(0); y += 20 + rnd() * 20; }
    for (i = 0; i < rows.length - 1; i++) for (var x = -120 + rnd() * 30; x < 120; x += 24 + rnd() * 46) d += 'M' + x.toFixed(0) + ' ' + rows[i].toFixed(0) + 'L' + (x + rnd() * 8 - 4).toFixed(0) + ' ' + rows[i + 1].toFixed(0);
    out += '<g clip-path="url(#c' + k + ')"><polygon points="' + pts + '" fill="' + base + '"/><g transform="translate(' + cx.toFixed(0) + ' ' + cy.toFixed(0) + ') rotate(' + a.toFixed(0) + ')">' + fills + '<path d="' + d + '" fill="none" stroke="#bfbaba" stroke-width="7"/><path d="' + d + '" fill="none" stroke="#fff" stroke-width="4.500"/></g></g>';
    k++;
  }
  document.getElementById('blocks').innerHTML = '<defs>' + defs + '</defs>' + out;
  out = '';
  [[2900, 478, 2990, 560], [3680, 420, 3830, 515], [3320, 480, 3430, 515], [2400, 470, 2510, 495]].forEach(function (b) {
    for (var i = 0; i < 16; i++) { var x = b[0] + rnd() * (b[2] - b[0]), y = b[1] + rnd() * (b[3] - b[1]); out += '<path d="M' + x.toFixed(0) + ' ' + y.toFixed(0) + 'h14"/>'; }
  });
  document.getElementById('ticks').innerHTML = out;
  out = '';
  [[881, 126], [1193, 72], [1667, 72], [1912, 135], [1892, 204], [1505, 423], [1587, 385], [1676, 212], [1989, 367], [2123, 186], [2184, 204], [2480, 188], [2508, 174], [2787, 156], [2571, 482], [3012, 240], [3231, 78], [3351, 282], [3438, 240], [3620, 111], [3786, 249], [3793, 288], [3192, 500], [3180, 288]].forEach(function (s) {
    out += '<rect x="' + (s[0] - 9) + '" y="' + (s[1] - 9) + '" width="18" height="18"/>';
  });
  document.getElementById('stations').innerHTML = out;
</script>
</body>
</html>
